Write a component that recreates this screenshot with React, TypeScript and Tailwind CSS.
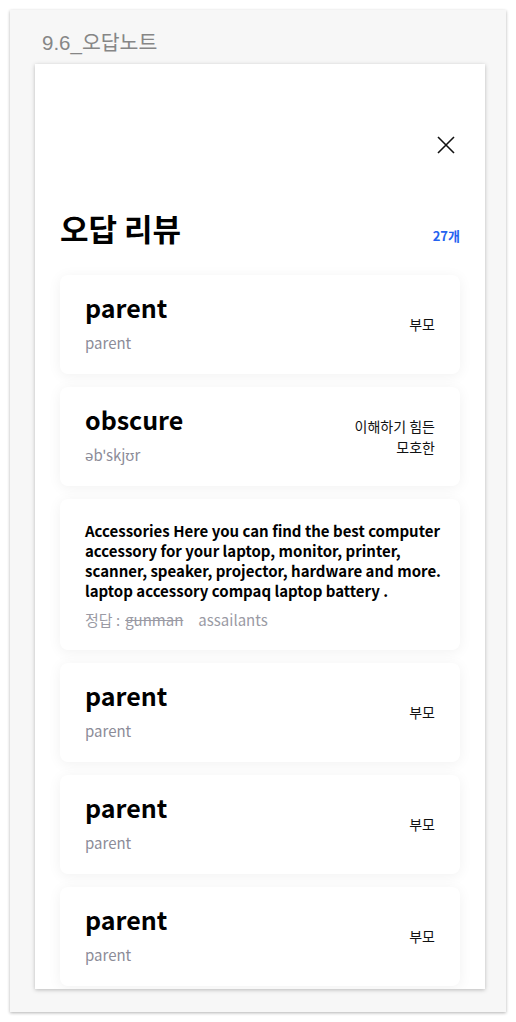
import React from "react";

const words = [
  { id: 1, word: "parent", sub: "parent", meaning: ["부모"] },
  { id: 2, word: "obscure", sub: "əb'skjʊr", meaning: ["이해하기 힘든", "모호한"] },
];

const more = [
  { id: 4, word: "parent", sub: "parent", meaning: ["부모"] },
  { id: 5, word: "parent", sub: "parent", meaning: ["부모"] },
  { id: 6, word: "parent", sub: "parent", meaning: ["부모"] },
];

const font = { fontFamily: '"Noto Sans CJK KR", "Noto Sans", sans-serif' };

function WordCard({ word, sub, meaning }: { word: string; sub: string; meaning: string[] }) {
  return (
    <div className="flex h-[99px] shrink-0 justify-between rounded-lg bg-white pl-[25px] pr-[25px] shadow-[0_2px_14px_rgba(0,0,0,0.06)]">
      <div className="flex flex-col pt-[17px]">
        <span className="text-[25px] font-bold leading-[30px] text-black">{word}</span>
        <span className="mt-[11px] text-[15px] leading-[20px] text-[#8c8c98]">{sub}</span>
      </div>
      <div className="flex flex-col items-end self-center text-[14px] leading-[21px] text-[#111]">
        {meaning.map((m) => (
          <span key={m}>{m}</span>
        ))}
      </div>
    </div>
  );
}

export default function App() {
  return (
    <div className="min-h-[1022px] bg-white pt-[10px] pl-[10px]">
      <div className="flex h-[1002px] w-[496px] flex-col bg-[#f7f7f7] shadow-[0_1px_3px_rgba(0,0,0,0.3)]">
        <div
          className="pl-[32px] pt-[21px] text-[20.5px] leading-[24px] text-[#868686]"
          style={{ fontFamily: '"Liberation Sans", "Noto Sans CJK KR", sans-serif' }}
        >
          9.6_오답노트
        </div>

        <div
          className="ml-[25px] mt-[9px] flex h-[925px] w-[450px] flex-col overflow-hidden bg-white px-[25px] shadow-[0_1px_4px_rgba(0,0,0,0.25)]"
          style={font}
        >
          {/* Close */}
          <div className="flex justify-end pr-[5px] pt-[72px]">
            <svg width="18" height="18" viewBox="0 0 18 18" fill="none" stroke="#111" strokeWidth="1.6">
              <path d="M1 1 L17 17 M17 1 L1 17" />
            </svg>
          </div>

          {/* Heading */}
          <div className="mt-[54px] flex h-[40px] items-end justify-between">
            <h1 className="text-[31px] font-bold leading-[40px] text-black">오답 리뷰</h1>
            <span className="pb-[4px] text-[13px] font-bold leading-[16px] text-[#2563f0]">27개</span>
          </div>

          {/* Cards */}
          <div className="mt-[27px] flex flex-col gap-[13px]">
            {words.map((w) => (
              <WordCard key={w.id} word={w.word} sub={w.sub} meaning={w.meaning} />
            ))}

            <div className="shrink-0 rounded-lg bg-white pb-[20px] pl-[25px] pr-[8px] pt-[22px] shadow-[0_2px_14px_rgba(0,0,0,0.06)]">
              <p className="text-[15px] font-bold leading-[20px] text-black">
                Accessories Here you can find the best computer accessory for your laptop, monitor, printer,
                scanner, speaker, projector, hardware and more. laptop accessory compaq laptop battery .
              </p>
              <div className="mt-[9px] flex items-center text-[15px] leading-[20px] text-[#9a9aa4]">
                <span>정답 :</span>
                <span className="ml-[5px] line-through">gunman</span>
                <span className="ml-[15px]">assailants</span>
              </div>
            </div>

            {more.map((w) => (
              <WordCard key={w.id} word={w.word} sub={w.sub} meaning={w.meaning} />
            ))}
          </div>
        </div>
      </div>
    </div>
  );
}
